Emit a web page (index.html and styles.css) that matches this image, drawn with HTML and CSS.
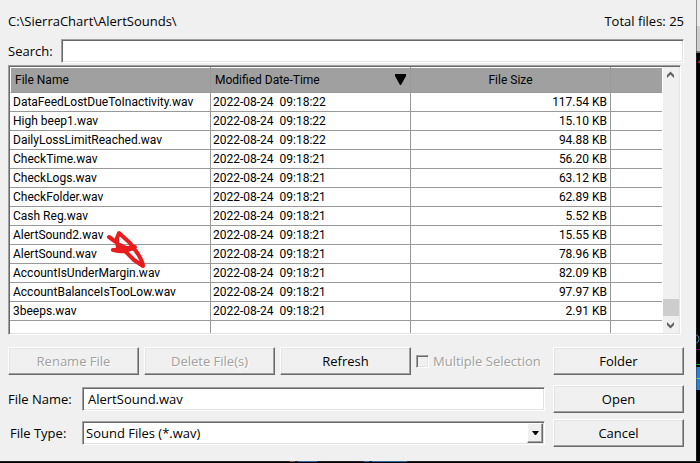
FILE: index.html
```html
<!DOCTYPE html>
<html lang="en">
<head>
    <meta charset="UTF-8">
    <meta name="viewport" content="width=device-width, initial-scale=1.0">
    <title>Alert Sounds</title>
    <link rel="stylesheet" href="styles.css">
</head>
<body>
    <div class="desktop">
        <form class="dialog">
            <div class="pathRow">
                <span>C:\SierraChart\AlertSounds\</span>
                <span>Total files: 25</span>
            </div>
            <div class="searchRow">
                <label for="search">Search:</label>
                <input type="text" id="search" class="field">
            </div>
            <div class="fileList">
                <table>
                    <colgroup>
                        <col class="colName">
                        <col class="colData">
                        <col class="colData">
                        <col>
                    </colgroup>
                    <thead>
                        <tr>
                            <th>File Name</th>
                            <th>
                                <div class="sorted">
                                    <span>Modified Date-Time</span>
                                    <svg width="11" height="11" viewBox="0 0 11 11"><path d="M0 0H11V2L6 11H5L0 2Z"/></svg>
                                </div>
                            </th>
                            <th class="sizeHead">File Size</th>
                            <th></th>
                        </tr>
                    </thead>
                    <tbody>
                        <tr><td>DataFeedLostDueToInactivity.wav</td><td>2022-08-24  09:18:22</td><td class="size">117.54 KB</td><td></td></tr>
                        <tr><td>High beep1.wav</td><td>2022-08-24  09:18:22</td><td class="size">15.10 KB</td><td></td></tr>
                        <tr><td>DailyLossLimitReached.wav</td><td>2022-08-24  09:18:22</td><td class="size">94.88 KB</td><td></td></tr>
                        <tr><td>CheckTime.wav</td><td>2022-08-24  09:18:21</td><td class="size">56.20 KB</td><td></td></tr>
                        <tr><td>CheckLogs.wav</td><td>2022-08-24  09:18:21</td><td class="size">63.12 KB</td><td></td></tr>
                        <tr><td>CheckFolder.wav</td><td>2022-08-24  09:18:21</td><td class="size">62.89 KB</td><td></td></tr>
                        <tr><td>Cash Reg.wav</td><td>2022-08-24  09:18:21</td><td class="size">5.52 KB</td><td></td></tr>
                        <tr><td>AlertSound2.wav</td><td>2022-08-24  09:18:21</td><td class="size">15.55 KB</td><td></td></tr>
                        <tr><td>AlertSound.wav</td><td>2022-08-24  09:18:21</td><td class="size">78.96 KB</td><td></td></tr>
                        <tr><td>AccountIsUnderMargin.wav</td><td>2022-08-24  09:18:21</td><td class="size">82.09 KB</td><td></td></tr>
                        <tr><td>AccountBalanceIsTooLow.wav</td><td>2022-08-24  09:18:21</td><td class="size">97.97 KB</td><td></td></tr>
                        <tr><td>3beeps.wav</td><td>2022-08-24  09:18:21</td><td class="size">2.91 KB</td><td></td></tr>
                        <tr class="lastRow"><td></td><td></td><td></td><td></td></tr>
                    </tbody>
                </table>
                <div class="scrollbar">
                    <svg width="15" height="17" viewBox="0 0 15 17"><path d="M4 11V8L7.5 4.5L11 8V11L7.5 7.5Z"/></svg>
                    <div class="thumb"></div>
                    <svg width="15" height="17" viewBox="0 0 15 17"><path d="M4 6V9L7.5 12.5L11 9V6L7.5 9.5Z"/></svg>
                </div>
                <svg class="scribble" width="42" height="38" viewBox="0 0 42 38">
                    <path d="M3 7L10 12L19 21L28 30L37 36C37 33 35 29 32 24L24 13L13 3L11 8L12 20M7 20L29 17C24 20 15 23 7 20M12 14L22 19"/>
                </svg>
            </div>
            <div class="actions">
                <button type="button" disabled>Rename File</button>
                <button type="button" disabled>Delete File(s)</button>
                <button type="button" class="refresh">Refresh</button>
                <div class="multi">
                    <input type="checkbox" id="multi" disabled>
                    <label for="multi">Multiple Selection</label>
                </div>
                <button type="button" class="folder">Folder</button>
            </div>
            <div class="fields">
                <label for="fileName">File Name:</label>
                <input type="text" id="fileName" class="field" value="AlertSound.wav">
                <button type="submit">Open</button>
                <label for="fileType" class="typeLabel">File Type:</label>
                <div class="combo">
                    <select id="fileType" class="field">
                        <option>Sound Files (*.wav)</option>
                    </select>
                    <span class="comboArrow"><svg width="7" height="4" viewBox="0 0 7 4"><path d="M0 0H7L4 4H3Z"/></svg></span>
                </div>
                <button type="button">Cancel</button>
            </div>
        </form>
        <!-- chart window showing behind the dialog -->
        <svg class="behind" width="4" height="461" viewBox="0 0 4 461">
            <rect width="4" height="461" fill="#000"/>
            <rect width="4" height="26" fill="#ececec"/>
            <rect y="26" width="4" height="25" fill="#cfcfcf"/>
            <rect y="51" width="4" height="2" fill="#777"/>
            <path d="M2 62L4 60V63H2Z" fill="#d01818"/>
            <path d="M0 335Q3 335 3 339Q3 343 0 343" fill="none" stroke="#4a7ab0"/>
            <rect y="349" width="4" height="1" fill="#900090"/>
            <rect y="364" width="4" height="1" fill="#0c0"/>
            <rect y="367" width="4" height="23" fill="#2a7fdc"/>
            <rect y="378" width="4" height="1" fill="#4fd88c"/>
            <rect width="1" height="461" fill="#333" fill-opacity="0.5"/>
        </svg>
    </div>
    <svg class="taskEdge" width="410" height="1" viewBox="0 0 410 1" preserveAspectRatio="xMinYMin">
        <rect x="290" width="5" height="1" fill="#7c6060"/>
        <rect x="298" width="19" height="1" fill="#386a9c"/>
        <rect x="364" width="5" height="1" fill="#386a9c"/>
        <rect x="372" width="35" height="1" fill="#386a9c"/>
    </svg>
</body>
</html>
```
FILE: styles.css
```css
*{
    box-sizing: border-box;
}
body{
    margin: 0;
    background: #000;
    font-family: "Open Sans", Tahoma, sans-serif;
    font-size: 13px;
    line-height: 18px;
    color: #000;
}
input, select, button{
    font: inherit;
    color: inherit;
    margin: 0;
    border-radius: 0;
}
svg{
    display: block;
}
.desktop{
    display: flex;
}
.dialog{
    flex: 1;
    padding: 12px 12px 14px 8px;
    background: #f0f0f0;
}
.behind{
    flex: none;
}
.taskEdge{
    background: #222;
    width: 100%;
}
.pathRow{
    display: flex;
    justify-content: space-between;
    margin-bottom: 9px;
}
.searchRow{
    display: flex;
    align-items: center;
    gap: 8px;
    margin-bottom: 2px;
}
.searchRow label{
    width: 45px;
}
.field, .fileList{
    background: #fff;
    border: 1px solid;
    border-color: #a0a0a0 #fff #fff #a0a0a0;
    box-shadow: inset 1px 1px #696969, inset -1px -1px #e3e3e3;
}
.field{
    flex: 1;
    width: 100%;
    height: 24px;
    padding: 0 5px;
    outline: none;
}
.fileList{
    position: relative;
    display: flex;
    gap: 1px;
    margin-right: 3px;
    padding: 1px;
    font-family: Roboto, "Segoe UI", sans-serif;
    font-size: 12px;
    line-height: 18px;
}
table{
    flex: 1;
    table-layout: fixed;
    border-spacing: 0;
}
.colName{
    width: 201px;
}
.colData{
    width: 200px;
}
th{
    height: 26px;
    padding: 0 4px;
    background: linear-gradient(#fff 1px, #a0a0a0 1px);
    border-right: 1px solid #999;
    border-bottom: 1px solid #989898;
    font-weight: normal;
    text-align: left;
}
th:first-child{
    border-left: 1px solid #fff;
}
th:last-child, td:last-child{
    border-right: none;
}
.sizeHead{
    text-align: center;
}
.sorted{
    display: flex;
    align-items: center;
    justify-content: space-between;
}
td{
    height: 19px;
    padding: 0 3px 0 2px;
    border-right: 1px solid #999;
    border-bottom: 1px solid #999;
    white-space: pre;
}
td:first-child{
    padding-left: 3px;
}
.size{
    text-align: right;
}
.lastRow td{
    height: 12px;
    border-bottom: none;
}
.scrollbar{
    display: flex;
    flex-direction: column;
    width: 16px;
    background: #f0f0f0;
    fill: #606060;
}
.thumb{
    height: 17px;
    margin-top: auto;
    background: #cdcdcd;
}
.scribble{
    position: absolute;
    left: 97px;
    top: 164px;
    overflow: visible;
    fill: none;
    stroke: #e81c1c;
    stroke-width: 4;
    stroke-linecap: round;
    stroke-linejoin: round;
}
button{
    width: 131px;
    height: 28px;
    padding: 0;
    background: #f0f0f0;
    border: 1px solid;
    border-color: #fff #696969 #696969 #fff;
    box-shadow: inset -1px -1px #a0a0a0, inset 1px 1px #e3e3e3;
}
button:disabled, .multi{
    color: #a0a0a0;
    text-shadow: 1px 1px #fff;
}
.actions{
    display: flex;
    align-items: center;
    gap: 5px;
    margin: 12px 0 10px;
}
.multi{
    display: flex;
    align-items: center;
    gap: 4px;
}
.multi input{
    appearance: none;
    width: 13px;
    height: 13px;
    border: 1px solid;
    border-color: #a0a0a0 #fff #fff #a0a0a0;
    box-shadow: inset 1px 1px #696969, inset -1px -1px #e3e3e3;
}
.folder{
    margin-left: auto;
}
.fields{
    display: grid;
    grid-template-columns: 66px 1fr 131px;
    align-items: center;
    gap: 6px 8px;
}
.typeLabel{
    padding-left: 2px;
}
.combo{
    position: relative;
}
.combo select{
    appearance: none;
    display: block;
    padding: 0 3px;
}
.comboArrow{
    position: absolute;
    top: 2px;
    right: 2px;
    display: flex;
    align-items: center;
    justify-content: center;
    width: 16px;
    height: 20px;
    background: #f0f0f0;
    border: 1px solid;
    border-color: #fff #696969 #696969 #fff;
    box-shadow: inset -1px -1px #a0a0a0;
    pointer-events: none;
}
```
